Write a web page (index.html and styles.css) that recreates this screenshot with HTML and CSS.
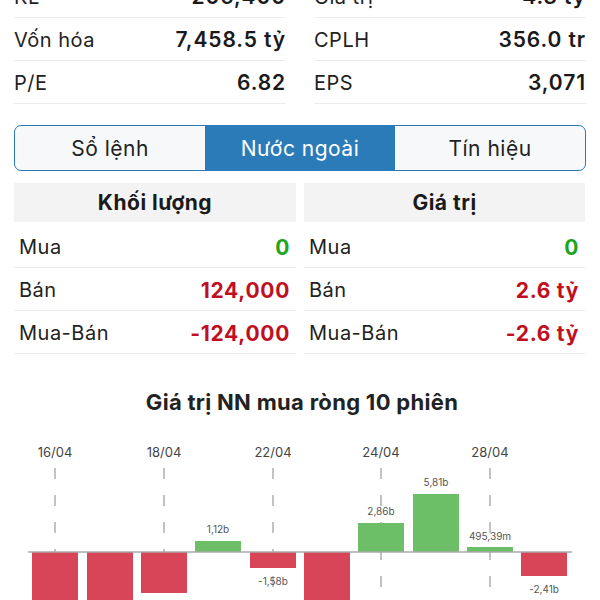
FILE: index.html
```html
<!DOCTYPE html>
<html>
<head>
  <meta charset="UTF-8">
  <title>Nước ngoài</title>
  <link rel="stylesheet" href="styles.css">
</head>
<body>
  <div class="stats-grid">
    <div class="stats-col">
      <div class="stats-row"><span class="stats-label">KL</span><span class="stats-value">206,400</span></div>
      <div class="stats-row"><span class="stats-label">Vốn hóa</span><span class="stats-value">7,458.5 tỷ</span></div>
      <div class="stats-row"><span class="stats-label">P/E</span><span class="stats-value">6.82</span></div>
    </div>
    <div class="stats-col">
      <div class="stats-row"><span class="stats-label">Giá trị</span><span class="stats-value">4.3 tỷ</span></div>
      <div class="stats-row"><span class="stats-label">CPLH</span><span class="stats-value">356.0 tr</span></div>
      <div class="stats-row"><span class="stats-label">EPS</span><span class="stats-value">3,071</span></div>
    </div>
  </div>

  <div class="tabs">
    <div class="tab">Sổ lệnh</div>
    <div class="tab active">Nước ngoài</div>
    <div class="tab">Tín hiệu</div>
  </div>

  <div class="flow-tables">
    <div class="flow-table">
      <div class="flow-header">Khối lượng</div>
      <div class="flow-row"><span>Mua</span><span class="up">0</span></div>
      <div class="flow-row"><span>Bán</span><span class="down">124,000</span></div>
      <div class="flow-row"><span>Mua-Bán</span><span class="down">-124,000</span></div>
    </div>
    <div class="flow-table">
      <div class="flow-header">Giá trị</div>
      <div class="flow-row"><span>Mua</span><span class="up">0</span></div>
      <div class="flow-row"><span>Bán</span><span class="down">2.6 tỷ</span></div>
      <div class="flow-row"><span>Mua-Bán</span><span class="down">-2.6 tỷ</span></div>
    </div>
  </div>

  <div class="chart-title">Giá trị NN mua ròng 10 phiên</div>

  <!-- net foreign value chart -->
  <svg class="chart" width="600" height="170" viewBox="0 0 600 170">
    <g class="dates">
      <text x="55" y="26">16/04</text>
      <text x="164" y="26">18/04</text>
      <text x="273" y="26">22/04</text>
      <text x="381" y="26">24/04</text>
      <text x="490" y="26">28/04</text>
    </g>
    <g class="grid">
      <line x1="55" y1="37" x2="55" y2="170"/>
      <line x1="164" y1="37" x2="164" y2="170"/>
      <line x1="273" y1="37" x2="273" y2="170"/>
      <line x1="381" y1="37" x2="381" y2="170"/>
      <line x1="490" y1="37" x2="490" y2="170"/>
    </g>
    <g class="bars">
      <rect class="neg" x="32" y="121" width="46" height="64"/>
      <rect class="neg" x="87" y="121" width="46" height="64"/>
      <rect class="neg" x="141" y="121" width="46" height="41"/>
      <rect class="pos" x="195" y="110" width="46" height="11"/>
      <rect class="neg" x="250" y="121" width="46" height="16"/>
      <rect class="neg" x="304" y="121" width="46" height="64"/>
      <rect class="pos" x="358" y="92" width="46" height="29"/>
      <rect class="pos" x="413" y="63" width="46" height="58"/>
      <rect class="pos" x="467" y="116" width="46" height="5"/>
      <rect class="neg" x="521" y="121" width="46" height="24"/>
    </g>
    <line class="axis" x1="28" y1="121" x2="572" y2="121"/>
    <g class="bar-labels">
      <text x="218" y="102">1,12b</text>
      <text x="273" y="154">-1,58b</text>
      <text x="381" y="84">2,86b</text>
      <text x="436" y="55">5,81b</text>
      <text x="490" y="109">495,39m</text>
      <text x="544" y="162">-2,41b</text>
    </g>
  </svg>
</body>
</html>
```

FILE: styles.css
```css
body {
  margin: 0;
  font-family: Inter, "Liberation Sans", sans-serif;
  background-color: #fff;
  color: #1c1c1c;
  overflow: hidden;
}
.stats-grid {
  display: grid;
  grid-template-columns: 1fr 1fr;
  gap: 28px;
  padding: 0 14px;
  margin-top: -25px;
}
.stats-row {
  display: flex;
  justify-content: space-between;
  align-items: center;
  height: 41px;
  padding-top: 1px;
  border-bottom: 1px solid #ececec;
  font-size: 20px;
}
.stats-label {
  color: #222;
  letter-spacing: 0.5px;
}
.stats-value {
  font-size: 21px;
  font-weight: 600;
  letter-spacing: 0.9px;
  color: #1a1a1a;
}
.tabs {
  display: grid;
  grid-template-columns: 1fr 1fr 1fr;
  margin: 21px 14px 0;
  height: 44px;
  border: 1.5px solid #2a7ab8;
  border-radius: 7px;
  overflow: hidden;
  background-color: #f6f8fa;
}
.tab {
  display: flex;
  align-items: center;
  justify-content: center;
  font-size: 21px;
  letter-spacing: 0.5px;
  color: #222;
}
.tab.active {
  background-color: #2b7bb9;
  color: #fff;
}
.flow-tables {
  display: grid;
  grid-template-columns: 282px 281px;
  gap: 8px;
  margin: 12px 15px 0 14px;
}
.flow-header {
  height: 39px;
  margin-bottom: 3px;
  display: flex;
  align-items: center;
  justify-content: center;
  background-color: #f3f3f3;
  font-size: 21px;
  font-weight: 700;
  letter-spacing: 0.5px;
  color: #1a1a1a;
}
.flow-row {
  display: flex;
  justify-content: space-between;
  align-items: center;
  height: 40px;
  padding: 2px 6px 0 5px;
  border-bottom: 1px solid #ececec;
  font-size: 20px;
  letter-spacing: 0.5px;
  color: #222;
}
.flow-row .up,
.flow-row .down {
  font-size: 21px;
  font-weight: 700;
  letter-spacing: 0.7px;
}
.flow-row .up {
  color: #1ea51e;
}
.flow-row .down {
  color: #c0101f;
}
.chart-title {
  margin-top: 35px;
  line-height: 26px;
  text-align: center;
  font-size: 22px;
  font-weight: 700;
  letter-spacing: 0.3px;
  color: #222;
  padding-left: 4px;
}
.chart {
  display: block;
  margin-top: 16px;
}
.dates text {
  font-size: 13px;
  fill: #444;
  text-anchor: middle;
}
.grid line {
  stroke: #9a9a9a;
  stroke-width: 1.2;
  stroke-dasharray: 11 16;
}
.bars .neg {
  fill: #d84558;
}
.bars .pos {
  fill: #6cbf66;
}
.axis {
  stroke: #a8a8a8;
  stroke-width: 1.5;
}
.bar-labels text {
  font-size: 10px;
  fill: #555;
  text-anchor: middle;
}
```
